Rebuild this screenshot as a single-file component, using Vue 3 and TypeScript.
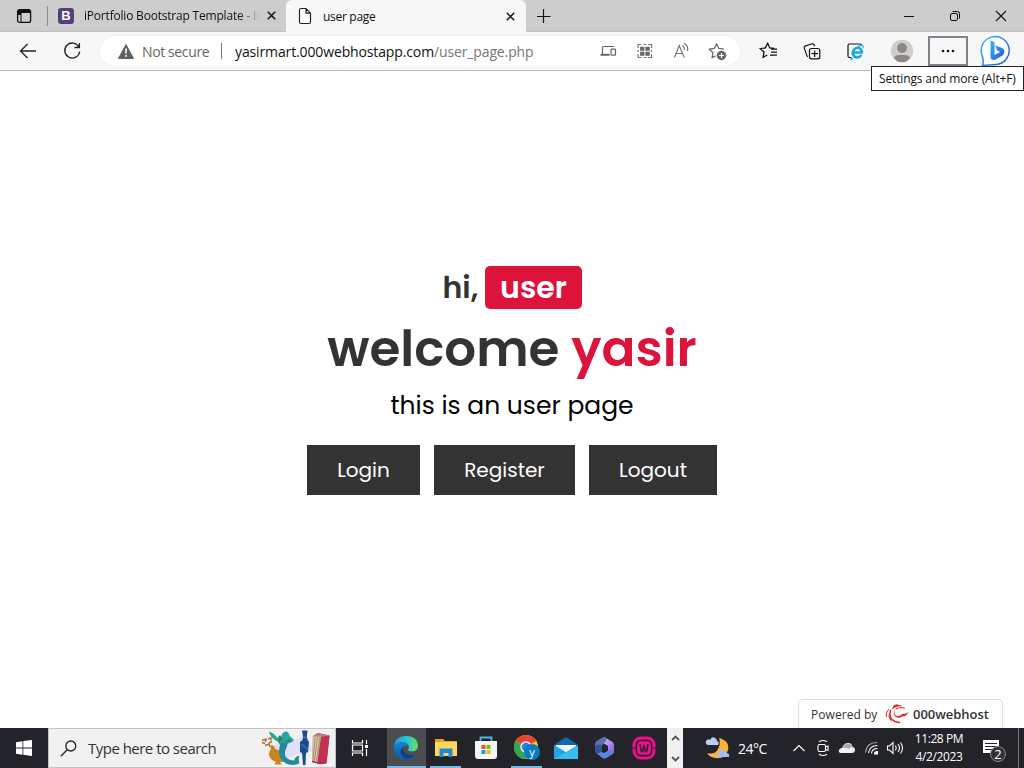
<script setup lang="ts">
const actions: string[] = ['Login', 'Register', 'Logout']
</script>

<template>
  <div class="screen">
    <header class="tabs">
      <svg class="i-workspace" width="16" height="16" viewBox="0 0 16 16"><rect x="1.600" y="1.600" width="13" height="12.800" rx="2" fill="none" stroke="#111" stroke-width="1.300" /><path d="M2 2h12.500v3H2zM2 5h3v2H2z" fill="#111" /><path d="M5 5v9" stroke="#111" stroke-width="1" /></svg>
      <span class="tab-divider"></span>
      <div class="tab tab-idle">
        <span class="bs-logo">B</span>
        <span class="tab-title faded">iPortfolio Bootstrap Template - In</span>
        <svg class="x" width="9" height="9" viewBox="0 0 9 9"><path d="M.8.8l7.4 7.4M8.2.8L.8 8.2" stroke="#111" stroke-width="1.500" /></svg>
      </div>
      <div class="tab tab-active">
        <svg width="14" height="18" viewBox="0 0 14 18"><path d="M3 1.500h5l4.500 4.700V15q0 1.500-1.500 1.500H3q-1.500 0-1.500-1.500V3q0-1.500 1.500-1.500zM8 1.800V6.200h4.500" fill="#fff" stroke="#222" stroke-width="1.200" /></svg>
        <span class="tab-title">user page</span>
        <svg class="x" width="9" height="9" viewBox="0 0 9 9"><path d="M.8.8l7.4 7.4M8.2.8L.8 8.2" stroke="#111" stroke-width="1.500" /></svg>
      </div>
      <svg class="plus" width="15" height="14" viewBox="0 0 15 14"><path d="M6.500 0v14M-.5 7.500h14" stroke="#111" stroke-width="1.200" /></svg>
      <div class="controls">
        <svg width="46" height="32" viewBox="0 0 46 32"><path d="M18 16.500h10" stroke="#111" /></svg>
        <svg width="46" height="32" viewBox="0 0 46 32" fill="none" stroke="#111"><rect x="18.500" y="13.500" width="7" height="7" rx="1.500" /><path d="M20.500 11.500h5q2 0 2 2v5" /></svg>
        <svg width="46" height="32" viewBox="0 0 46 32"><path d="M18 11l10 10M28 11L18 21" stroke="#111" stroke-width="1.100" /></svg>
      </div>
    </header>

    <nav class="toolbar">
      <svg class="slot" width="44" height="38" viewBox="0 0 44 38" fill="none" stroke="#222" stroke-width="1.300"><path d="M27.500 12l-7 7 7 7M20.500 19H36" /></svg>
      <svg class="slot" width="44" height="38" viewBox="0 0 44 38" fill="none" stroke="#222" stroke-width="1.300"><path d="M29 15.200A7.500 7.500 0 1 0 29.700 19.500M29.400 11v4.500h-5" /></svg>
      <div class="address">
        <svg width="16" height="15" viewBox="0 0 16 15"><path d="M8 .5L15.500 14.500H.5z" fill="#606060" stroke="#606060" stroke-linejoin="round" /><path d="M8 4.500v5M8 11v1.700" stroke="#fff" stroke-width="1.600" /></svg>
        <span class="insecure">Not secure</span>
        <span class="addr-divider"></span>
        <span class="url">yasirmart.000webhostapp.com<span class="path">/user_page.php</span></span>
        <div class="addr-icons">
          <svg width="36" height="30" viewBox="0 0 36 30"><path d="M11.500 18v-6.500q0-1 1-1h11" fill="none" stroke="#666" stroke-width="1.200" /><path d="M9.500 18.800h9" stroke="#666" stroke-width="2" /><rect x="20" y="13.200" width="4.500" height="6" rx=".6" fill="none" stroke="#666" stroke-width="1.200" /></svg>
          <svg width="36" height="30" viewBox="-.5 0 36 30"><path d="M10.600 12V8.500H14M20.500 8.500H24V12M24 18v3.500h-3.500M14 21.500h-3.400V18M10.600 14v2M24 14v2M16 8.500h3M16 21.500h3" fill="none" stroke="#777" stroke-width="1.200" /><path d="M12.600 10.700h4.300v4h-4.300zM17.900 10.700h4.300v4h-4.300zM12.600 15.700h4.300v4h-4.300zM17.900 15.700h4.300v4h-4.300z" fill="#666" /></svg>
          <svg width="36" height="30" viewBox="0 0 36 30" fill="none" stroke="#707070" stroke-width="1.100"><path d="M11.500 21.500L16.200 9.500l5 12M13 17.500h6.700M19.500 9.500q2.500 2 1.700 4.500M21.200 7.200q4.500 3 3.300 7.800" /></svg>
          <svg width="36" height="30" viewBox="0 0 36 30"><path d="M24.800 13.100l-4.900-.7L17.600 7.800l-2.300 4.600-5 .8 3.700 3.500-1 5.100 3.500-1.900" fill="none" stroke="#666" stroke-width="1.200" stroke-linejoin="round" /><circle cx="22.500" cy="19.500" r="4.700" fill="#666" /><path d="M20 19.500h5M22.500 17v5" stroke="#fff" stroke-width="1.200" /></svg>
        </div>
      </div>
      <div class="tools">
        <svg width="44" height="38" viewBox="0 0 44 38" fill="none" stroke="#111" stroke-width="1.300"><path d="M28.300 16.500l-4.500-.6-2.100-4.700-2.300 4.700-5.100.7 3.700 3.500-.9 5.200 4.200-2.300M25 17.200h6M25 20.200h6M24 23.200h7" /></svg>
        <svg width="44" height="38" viewBox="0 0 44 38" fill="none" stroke="#111" stroke-width="1.200"><rect x="19.500" y="16.500" width="10.300" height="10.300" rx="2" /><path d="M24.700 18.500v6.500M21.500 21.700h6.500M18 24.500q-.8-.2-1.200-1.100l-2.600-7.500q-.4-1.300.8-1.800l7-2.300q1.500-.3 2 1l.5 1.500" /></svg>
        <svg width="44" height="38" viewBox="1 0 44 38"><path d="M18 25.500h-1.500q-1.500 0-1.500-1.500v-10.500q0-1.500 1.500-1.500h10.500q1.500 0 1.500 1.500" fill="none" stroke="#111" stroke-width="1.200" /><path d="M28.500 23q-4 4.500-7.500 1-2.500-3.500.4-7 4.500-3.500 7.500 2v1.600H21" fill="none" stroke="#18a5e5" stroke-width="2.500" /><path d="M19 25.500q-2.500 3 1 1.200M24 15.500q7-4.500 6 1" fill="none" stroke="#28b8ee" stroke-width="1.300" /></svg>
        <svg width="48" height="38" viewBox="0 0 48 38"><circle cx="24" cy="19" r="11.200" fill="#d0cecb" /><circle cx="24" cy="16" r="4.900" fill="#8b8783" /><path d="M16 26q1-3 5-3h6q4 0 5 3-3 4.200-8 4.200T16 26" fill="#8b8783" /></svg>
        <div class="more"><svg width="14" height="4" viewBox="0 0 14 4" fill="#111"><circle cx="2" cy="2" r="1.300" /><circle cx="7" cy="2" r="1.300" /><circle cx="12" cy="2" r="1.300" /></svg></div>
        <svg class="bing" width="32" height="32" viewBox="0 0 32 32"><defs><linearGradient id="bb" x2="1" y2="1"><stop stop-color="#35b8f4" /><stop offset="1" stop-color="#2457d8" /></linearGradient></defs><path d="M2.500 30.500q1.500-4-.2-9.500A14 14 0 1 1 16 29.500z" fill="#fff" stroke="url(#bb)" stroke-width="1.500" /><path d="M10.500 5.500l4 1.600v13l5.500-3-3-1.800-1.900-4.800 7 2.600q3 1.500 2 5-.5 1.500-2 2.600l-7 4q-2 .7-3.600-.4-1-.8-1-2.200z" fill="url(#bb)" /></svg>
      </div>
      <div class="tooltip"><span>Settings and more (Alt+F)</span></div>
    </nav>

    <main class="page">
      <h3 class="greeting"><span class="hi">hi,</span><span class="role">user</span></h3>
      <h1 class="welcome">welcome <span>yasir</span></h1>
      <p class="note">this is an user page</p>
      <div class="buttons">
        <a v-for="a in actions" :key="a" class="btn" :class="a.toLowerCase()"><span>{{ a }}</span></a>
      </div>
      <aside class="powered">
        <span class="by">Powered by</span>
        <svg width="24" height="20" viewBox="0 0 24 20" fill="none" stroke="#e42320" stroke-linecap="round"><path d="M9.500 7q-1 4 2 5 3 .8 6-2 3 .5 5.500-1.500-1.500 4-6 3.700-2 2-4.500 1.300-5-1.500-3-6.500z" fill="#e42320" stroke-width=".3" /><path d="M5.500 6.500Q3 14.500 10 17.500q2.500 1 4.500 1" stroke-width="1.500" /><path d="M3.500 5.500Q.2 9 1.200 12.500M3.800 11.500q0 3 2.500 5.500" stroke-width="1" /><path d="M7.500 4.500q3-3.500 8.500-2.800M11 5q4-2.500 8.500-.8M8.500 2.500q1.500-1.700 4-1.800" stroke-width="1.100" /></svg>
        <span class="host">000webhost</span>
      </aside>
    </main>

    <footer class="taskbar">
      <div class="start"><svg width="16" height="16" viewBox="0 0 16 16" fill="#fff"><path d="M0 2.200L6.500 1.200v6.300H0zM7.300 1.100L16 0v7.500H7.300zM0 8.400h6.500v6.300L0 13.800zM7.300 8.400H16V16l-8.700-1.200z" /></svg></div>
      <div class="search">
        <svg width="17" height="17" viewBox="0 0 17 17" fill="none" stroke="#222" stroke-width="1.300"><circle cx="10.800" cy="6" r="5" /><path d="M7.300 9.700L.8 16.200" /></svg>
        <span>Type here to search</span>
        <svg class="art" width="70" height="38" viewBox="0 0 70 38">
          <path d="M10 23q4-10 14-12 9 1 14-2 6-2 10 0l3 13q-6 5-15 3-8 6-20 3z" fill="#dfdff5" />
          <path d="M9 17q2-1.500 4 0 1 2 1 3 6 1 7.500 7l.5 6h-3l2 2.500h-8l2-2.500q-6-2-7-7-.3-4 2-6z" fill="#cb841c" />
          <path d="M1 11.500l4-1.500-.5 3M4 16.500l4-1.500 1 3M7 10.500l3-2v3M1 13.500l3 1M8 14l3-1.500" stroke="#a86e25" stroke-width="1.400" fill="none" />
          <path d="M8 2.500q5 1.500 8 6l5 1.500q-1.500-5 2-7 4-1.500 5 2 .2 2.500 3 4 2 1 1.500 3l-4 2q-3 .5-4 4L19 16q-2-4-5-5-5-3-6-8.500z" fill="#25a79b" />
          <path d="M20 14l6-.5q1 2-.5 5-2.500 5-1 9 3 4 9 4 0-4 5-5-1 3-.5 6 1 2-1 2.500-7 2-12-.5-7-4-7-11-.3-5 2-9.500z" fill="#23899b" />
          <path d="M19 6q-3 3-1 7l4-3zM24 12l5-2 1 3" fill="#36776e" />
          <path d="M41 1.500h5.500L45.800 8l.7 3 1.500 2-1 10-2 1-.5 12h-2.500l-1-12-2-1V13l2.500-2 .5-3z" fill="#194d8c" /><path d="M41.500 8.300h4M40 15l7 5" stroke="#7a97b8" stroke-width=".8" />
          <path d="M52 7l5-3 11.500 2.500-3 28-5.500.8-9-2z" fill="#8d3548" /><path d="M51.500 7.500l6-2.500 4 1.500-4 27-6.500-2z" fill="#dcc8a9" /><path d="M60 7.500l8.500-.8-3 27-9.500 1.500z" fill="#c33052" /><path d="M51.500 7.500l6-3 11 2-7 1.300z" fill="#ae8577" /><path d="M54 8.500l-2 23M56.500 8l-3 24M59 8l-3.500 24" stroke="#91735f" stroke-width=".7" />
        </svg>
      </div>
      <div class="app taskview"><svg width="18" height="18" viewBox="0 0 18 18" fill="none" stroke="#fff" stroke-width="1.200"><path d="M1.500 1v3h10V1M1.500 17v-3h10v3M1.500 6h10v6h-10zM15.500 1v4M15.500 10v7" /><path d="M14 6h3v3h-3z" fill="#fff" stroke="none" /></svg></div>
      <div class="app edge active">
        <svg width="24" height="24" viewBox="0 0 24 24"><defs><linearGradient id="eg" x2="1"><stop stop-color="#189ce1" /><stop offset=".55" stop-color="#29c8d4" /><stop offset="1" stop-color="#68df57" /></linearGradient><linearGradient id="eb" x2="0" y2="1"><stop stop-color="#1686cf" /><stop offset="1" stop-color="#1157a6" /></linearGradient></defs><path d="M0 11Q1 0 12 0q11 0 12 9 0 8-9 6-2-1 0-3 0-5-6-6-6-.4-9 5z" fill="url(#eg)" /><path d="M0 11q2-5 8-5 5 0 7 4-5-2-6.500 2-1 5 5 7 4 1.500 8.500-1-4 6-10 6Q0 24 0 11z" fill="url(#eb)" /><path d="M9 10q-5 6 0 11 7 4 13-3-6 3-11-1-3-3-2-7z" fill="#103e84" /></svg>
      </div>
      <div class="app explorer active-line"><svg width="22" height="20" viewBox="0 0 22 20"><path d="M0 1h8l2 2h12v14H0z" fill="#e8a31b" /><path d="M0 4h22v14H0z" fill="#ffd75e" /><path d="M4.500 10.500h13V19h-4v-4h-5v4h-4z" fill="#2389d4" /></svg></div>
      <div class="app store"><svg width="24" height="24" viewBox="0 0 24 24"><path d="M6.500 6V1.500h11V6" fill="none" stroke="#48b9e8" stroke-width="1.800" /><path d="M1 5h22v15q0 3-3 3H4q-3 0-3-3z" fill="#f5f5f5" /><path d="M7.500 9h4v4h-4z" fill="#f34f1c" /><path d="M12.500 9h4v4h-4z" fill="#7fbc00" /><path d="M7.500 14h4v4h-4z" fill="#01a6f0" /><path d="M12.500 14h4v4h-4z" fill="#ffba01" /></svg></div>
      <div class="app chrome active-line"><svg width="26" height="26" viewBox="0 0 26 26"><circle cx="12" cy="12" r="12" fill="#f9c927" /><path d="M12 12L1.600 6A12 12 0 0 1 22.400 6z" fill="#e84435" /><path d="M12 12L1.600 6A12 12 0 0 0 12 24l4-8z" fill="#32a653" /><circle cx="12" cy="12" r="5.700" fill="#fff" /><circle cx="12" cy="12" r="4.400" fill="#3479e8" /><circle cx="18" cy="17" r="8" fill="#087bc1" /><text x="18" y="20.500" text-anchor="middle" font-size="11" fill="#fff">y</text></svg></div>
      <div class="app mail"><svg width="24" height="24" viewBox="0 0 24 24"><path d="M0 9L12 1l12 8v14H0z" fill="#1267b4" /><path d="M2 9h20v9H2z" fill="#f4f7f9" /><path d="M0 9l12 7L24 9v14H0z" fill="#20a5e7" /><path d="M2 9h20l-10 7z" fill="#f5f8fa" /><path d="M0 23h24V10z" fill="#39bdef" /></svg></div>
      <div class="app office"><svg width="22" height="24" viewBox="0 0 22 24"><defs><linearGradient id="of" x1="0" y1="0" x2="1" y2="1"><stop stop-color="#c4c8f7" /><stop offset="1" stop-color="#8e53d8" /></linearGradient></defs><path d="M10 1l8 4.500q2 1 2 3.500v6q0 2-2 3l-2 1-2-3.500V10L9 7z" fill="url(#of)" /><path d="M2 17l5-1.500 3 1.500 5-3 5 2.500q-.5 1.200-2 2l-5.500 3.500q-2 1-4 0z" fill="#5b82ea" /><path d="M10 1q3 .5 2 4l-4 4.500v6L3 17.500q-2-1-2-3.500V8q0-2 2-3.200l5-3z" fill="#5d6fae" /><path d="M1 10q3-2 7-.5v6L3 17.500q-2-1-2-3.500z" fill="#34508f" /></svg></div>
      <div class="app wamp"><svg width="24" height="24" viewBox="0 0 24 24"><rect x="2" y="2" width="20" height="20" rx="7" fill="none" stroke="#f60b92" stroke-width="3" /><rect x="5.200" y="5.200" width="13.600" height="13.600" rx="4" fill="#f60b92" /><path d="M8 8l1.300 7.500h1.400L12 9l1.300 6.500h1.400L16 8" fill="none" stroke="#26232a" stroke-width="1.500" /><path d="M0 12h4M20 12h4" stroke="#26232a" stroke-width="1" /></svg></div>
      <div class="scroller"><svg width="9" height="6" viewBox="0 0 9 6"><path d="M1 5l3.500-3.500L8 5" /></svg><svg width="9" height="6" viewBox="0 0 9 6"><path d="M1 1l3.500 3.500L8 1" /></svg></div>
      <div class="weather">
        <svg width="26" height="24" viewBox="0 0 26 24"><path d="M14 2q11 3 9 12-3 10-13 8-6-1-8-5 8 2 11-4 3-5 1-11z" fill="#f7b43c" /><path d="M3 9q-3-1-2-4 2-3 4-1 2-4 5-2 2 1 2 3 3 1 1 4z" fill="#b7cffa" /><path d="M13 21q-2-3 1-4 1-4 5-3 2 1 2 3 4 0 3 4z" fill="#9dc0ff" /></svg>
        <span>24°C</span>
      </div>
      <div class="tray">
        <svg width="24" height="40" viewBox="0 0 24 40"><path d="M6.500 23l5.500-5.500 5.500 5.500" /></svg>
        <svg width="24" height="40" viewBox="0 0 24 40"><rect x="7" y="16.500" width="7.500" height="7" rx="1.500" /><path d="M14.500 19l2.500-1v4.500l-2.500-1M8 13.800q4-2.600 8 0M8 26.200q4 2.600 8 0" /></svg>
        <svg width="25" height="40" viewBox="1 0 25 40"><path d="M7 25q-3-.5-2-3 1-2 3-2 2-5 6-5 4 0 4.500 4 3 .5 2.500 3.500-.5 2.500-3 2.500z" fill="#f1f1f1" stroke="none" /><path d="M8 20q3-6 7-4 3 0 3.500 3-2 0-4 2-3-2-6.500-1z" fill="#aaa" stroke="none" /></svg>
        <svg width="24" height="40" viewBox="0 0 24 40"><path d="M8.500 25Q9.500 17.500 17.500 17.500M11.500 25.500q.5-5 6-5" /><path d="M14.500 26q0-2.500 3-2.500V26z" fill="#fff" /><path d="M5.500 24.500Q6.500 14.500 17 14.500" stroke="#aaa" /></svg>
        <svg class="sound" width="24" height="40" viewBox="0 0 24 40"><path d="M4.500 18h2l3.500-3.500v11L6.500 22h-2zM12.500 17.500q1.500 2.500 0 5M15 16q3 4 0 8M17.500 14.500q4 5.500 0 11" /></svg>
      </div>
      <div class="clock"><span>11:28 PM</span><span class="date">4/2/2023</span></div>
      <svg class="notice" width="28" height="30" viewBox="0 0 28 30"><path d="M3 7h16v13h-4l-4 3v-3H3z" fill="#fff" /><path d="M5 10.500h12M5 13.500h12M5 16.500h8" stroke="#24252a" /><circle cx="18" cy="21" r="7.500" fill="#303136" stroke="#8b8b8f" /><text x="18" y="25.500" text-anchor="middle" font-size="13" fill="#fff">2</text></svg>
      <span class="show-desktop"></span>
    </footer>
  </div>
</template>

<style>
html, body { margin: 0; overflow: hidden; }
</style>

<style scoped>
* { box-sizing: border-box; }
.screen { width: 1024px; height: 768px; display: flex; flex-direction: column; overflow: hidden; background: #fff; font-family: "Segoe UI", "Open Sans", "Noto Sans", sans-serif; color: #111; white-space: nowrap; }
svg { display: block; flex: none; }
span { flex: none; }
.tabs { height: 32px; flex: none; display: flex; align-items: center; background: #cdcdcd; border-bottom: 1px solid #c0c0c0; }
.i-workspace { margin-left: 16px; }
.tab-divider { width: 1px; height: 20px; background: #8a8a8a; margin: 0 10px 0 15px; }
.tab { display: flex; align-items: center; }
.tab-idle { width: 228px; }
.bs-logo { width: 16px; height: 16px; border-radius: 3px; background: #563d7c; color: #fff; font: bold 13px/16px "Liberation Sans", sans-serif; text-align: center; margin-right: 10px; }
.tab-title { font-size: 12px; }
.faded { width: 176px; letter-spacing: -.2px; margin-right: 7px; -webkit-mask-image: linear-gradient(90deg, #000 155px, transparent 176px); mask-image: linear-gradient(90deg, #000 155px, transparent 176px); }
.tab-active { width: 240px; height: 32px; align-self: flex-start; background: #f7f7f7; border-radius: 6px 6px 0 0; padding: 0 11px 0 12px; }
.tab-active .tab-title { margin-left: 11px; letter-spacing: -.3px; }
.tab-active .x { margin-left: auto; }
.plus { margin-left: 11px; }
.controls { display: flex; margin-left: auto; }
.toolbar { height: 39px; flex: none; display: flex; align-items: center; position: relative; background: #f7f7f7; border-bottom: 1px solid #bcbcbc; }
.slot:nth-child(2) { margin-left: 6px; }
.address { width: 640px; height: 30px; flex: none; margin-left: 6px; border-radius: 15px; background: #fff; display: flex; align-items: center; padding-left: 18px; box-shadow: 0 0 2px #e4e4e4; }
.insecure { width: 70px; margin-left: 8px; color: #666; font-size: 14px; letter-spacing: -.38px; }
.addr-divider { width: 1px; height: 16px; background: #777; margin: 0 13px 0 9px; }
.url { font-size: 14px; letter-spacing: -.13px; }
.path { color: #777; }
.addr-icons { display: flex; margin-left: auto; padding-right: 5px; }
.tools { display: flex; align-items: center; margin-left: 6px; }
.more { width: 40px; height: 30px; border: 2px solid #7e838d; display: flex; align-items: center; justify-content: center; margin-left: 2px; }
.bing { margin-left: 12px; }
.tooltip { position: absolute; z-index: 2; right: 0; top: 34px; width: 153px; height: 25px; background: #fff; border: 1px solid #222; font-size: 12px; line-height: 24px; padding-left: 7px; letter-spacing: -.14px; }
.page { flex: 1; display: flex; flex-direction: column; align-items: center; position: relative; padding-top: 195px; font-family: Poppins, Inter, sans-serif; }
h1, h3, p { margin: 0; }
.greeting { display: flex; align-items: center; height: 43px; font-size: 30px; font-weight: 600; color: #333; }
.hi { width: 42px; }
.role { width: 97px; height: 43px; line-height: 43px; border-radius: 5px; color: #fff; background: #dc143c; text-align: center; padding-left: 1px; }
.welcome { height: 75px; line-height: 75px; margin-top: 2px; font-size: 50px; font-weight: 600; color: #333; }
.welcome span { color: #dc143c; }
.note { height: 38px; line-height: 38px; margin-top: 1px; font-size: 25px; color: #000; }
.buttons { display: flex; gap: 14px; margin-top: 20px; }
.btn { height: 50px; background: #333; color: #fff; font-size: 20px; line-height: 50px; text-align: center; }
.login { width: 113px; }
.register { width: 141px; }
.logout { width: 128px; }
.powered { position: absolute; right: 21px; bottom: 0; width: 205px; height: 29px; border: 1px solid #ddd; border-bottom: 0; border-radius: 5px 5px 0 0; display: flex; align-items: center; padding-left: 12px; font-family: "Open Sans", sans-serif; color: #333; }
.by { width: 67px; font-size: 12px; letter-spacing: .05px; margin-right: 7px; }
.host { font: 600 13px "Open Sans", sans-serif; margin-left: 4px; letter-spacing: -.02px; }
.taskbar { height: 40px; flex: none; display: flex; background: #222429; color: #fff; }
.start { width: 48px; display: flex; align-items: center; justify-content: center; }
.search { width: 288px; display: flex; align-items: center; background: #f1f1f1; border: 1px solid #c3c3c3; color: #333; font-size: 15px; padding-left: 11px; }
.search > span { margin-left: 11px; letter-spacing: -.52px; }
.art { margin-left: auto; margin-right: 4px; }
.app { width: 40px; display: flex; align-items: center; justify-content: center; flex: none; }
.taskview { width: 47px; margin-right: 4px; }
.active { width: 39px; background: #4b4d51; border-bottom: 2px solid #76b9ed; padding-top: 2px; padding-right: 2px; }
.active-line { border-bottom: 2px solid #76b9ed; padding-top: 2px; }
.explorer { width: 31px; margin: 0 4px; }
.store { width: 41px; }
.chrome { width: 31px; margin: 0 4px 0 5px; }
.office { width: 38px; }
.wamp { width: 39px; }
.scroller { width: 16px; background: #f1f1f1; display: flex; flex-direction: column; justify-content: space-between; align-items: center; padding: 7px 0 6px; margin-left: 4px; }
.scroller path { fill: none; stroke: #555; stroke-width: 1.8; }
.weather { display: flex; align-items: center; width: 104px; padding-left: 22px; font-size: 14px; }
.weather span { margin-left: 7px; letter-spacing: -.5px; }
.tray { display: flex; }
.tray svg { fill: none; stroke: #fff; stroke-width: 1.1; }
.tray .sound { margin: 0 2px 0 -1px; }
.clock { width: 60px; display: flex; flex-direction: column; align-items: center; font-size: 12px; line-height: 18px; padding-top: 2px; letter-spacing: -.4px; }
.notice { margin: 5px 0 0 11px; }
.show-desktop { width: 1px; background: #777; margin-left: auto; margin-right: 5px; }
</style>
